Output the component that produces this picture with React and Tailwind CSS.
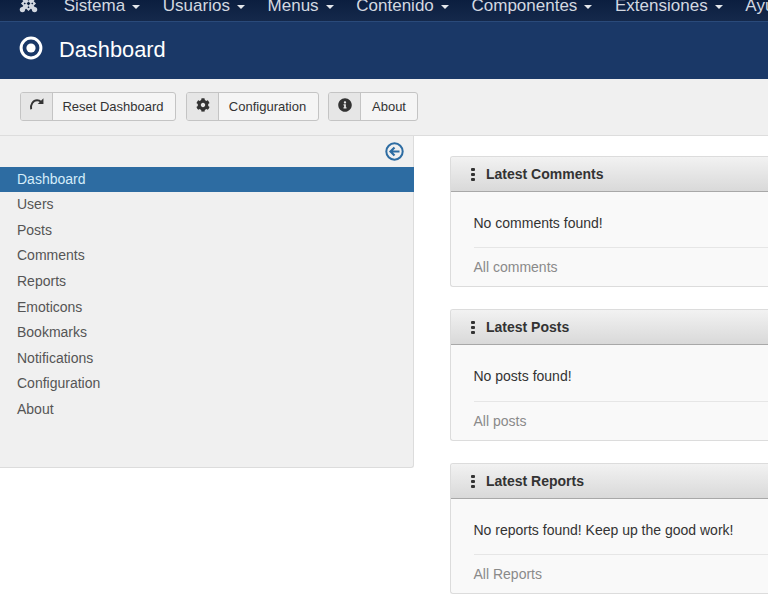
import React from "react";
import { FaCog, FaInfoCircle } from "react-icons/fa";

const navItems = ["Sistema", "Usuarios", "Menus", "Contenido", "Componentes", "Extensiones"];
const sideItems = ["Users", "Posts", "Comments", "Reports", "Emoticons", "Bookmarks", "Notifications", "Configuration", "About"];

function Caret() {
  return <span className="ml-[7px] inline-block h-0 w-0 border-x-[4.5px] border-t-[4.5px] border-x-transparent border-t-[#e4e7ec] align-middle" />;
}

function Joomla() {
  return (
    <svg viewBox="0 0 20 20" className="h-[19px] w-[19px]" fill="none" stroke="#d3d8e0" strokeWidth="4">
      <path d="M4 4l12 12M16 4L4 16" />
      <path d="M10 3.5L16.5 10 10 16.5 3.5 10z" strokeWidth="2" />
      <circle cx="3.6" cy="3.6" r="2.8" fill="#d3d8e0" stroke="none" />
      <circle cx="16.4" cy="3.6" r="2.8" fill="#d3d8e0" stroke="none" />
      <circle cx="3.6" cy="16.4" r="2.8" fill="#d3d8e0" stroke="none" />
      <circle cx="16.4" cy="16.4" r="2.8" fill="#d3d8e0" stroke="none" />
      <path d="M10 8L12 10 10 12 8 10z" fill="#10233f" stroke="none" />
    </svg>
  );
}

function DotCircle() {
  return (
    <svg viewBox="0 0 24 24" className="mb-[5px] h-[24px] w-[24px]" fill="none">
      <circle cx="12" cy="12" r="9.9" stroke="#fff" strokeWidth="3" />
      <circle cx="12" cy="12" r="4.6" fill="#fff" />
    </svg>
  );
}

function Redo() {
  return (
    <svg viewBox="0 0 14 14" className="h-[15px] w-[15px]" fill="none">
      <path d="M2 11.5C1 7 4 3 7.5 3c1.5 0 2.8.6 3.7 1.6" stroke="#333" strokeWidth="1.8" />
      <path d="M13.5 1.2v5.3H8.2z" fill="#333" />
    </svg>
  );
}

function BackArrow() {
  return (
    <svg viewBox="0 0 19 19" className="h-[19px] w-[19px]" fill="none" stroke="#2d6ca2">
      <circle cx="9.5" cy="9.5" r="8.2" strokeWidth="2" />
      <path d="M14.5 9.5H6M9.5 5.5l-4 4 4 4" strokeWidth="2.2" />
    </svg>
  );
}

function ToolButton({ icon, label, width, extra = "", labelClass = "pr-[2px]" }) {
  return (
    <button className={`flex h-[29px] items-stretch overflow-hidden rounded-[3px] border border-[#c4c4c4] bg-[#f5f5f5] text-[13px] text-[#333] ${width} ${extra}`}>
      <span className="flex w-[32px] items-center justify-center border-r border-[#c4c4c4] bg-[#e6e6e6] pb-[3px]">{icon}</span>
      <span className={`flex flex-1 items-center justify-center pt-[1px] ${labelClass}`}>{label}</span>
    </button>
  );
}

function Dots() {
  return (
    <span className="flex h-[13px] w-[4px] flex-col justify-between">
      <span className="h-[3px] w-[4px] rounded-[1px] bg-[#333]" />
      <span className="h-[3px] w-[4px] rounded-[1px] bg-[#333]" />
      <span className="h-[3px] w-[4px] rounded-[1px] bg-[#333]" />
    </span>
  );
}

function Panel({ title, message, link, bodyClass }) {
  return (
    <section className="overflow-hidden rounded-l-[3px] border-y border-l border-[#dcdcdc] bg-[#f9f9f9]">
      <header className="flex h-[35px] items-center gap-[11px] border-b border-[#a8a8a8] bg-gradient-to-b from-[#f2f2f2] to-[#d9d9d9] pl-[20px] text-[14px] font-bold text-[#333]">
        <Dots />
        <span>{title}</span>
      </header>
      <div className="pl-[22.5px]">
        <p className={`flex items-center text-[14px] text-[#333] ${bodyClass}`}>{message}</p>
        <p className="flex h-[39px] items-center border-t border-[#e6e6e6] text-[14px] text-[#8a8a8a]">{link}</p>
      </div>
    </section>
  );
}

export default function App() {
  return (
    <div className="h-[602px] w-[768px] overflow-hidden bg-white font-['Liberation_Sans',sans-serif]">
      <nav className="flex h-[22px] items-end gap-[22.7px] overflow-hidden border-b border-[#2a4a7a] bg-gradient-to-b from-[#0b1e3f] to-[#15294b] pl-[19px] text-[17px] text-[#d3d8e0]">
        <span className="mb-[8px] mr-[3px] shrink-0"><Joomla /></span>
        {navItems.map((n) => (
          <span key={n} className="whitespace-nowrap leading-[30px]">{n}<Caret /></span>
        ))}
        <span className="whitespace-nowrap leading-[30px]">Ayuda</span>
      </nav>
      <div className="flex h-[57px] items-center gap-[16px] bg-[#1a3867] pl-[19px] text-white">
        <DotCircle />
        <h1 className="text-[21.8px] font-normal">Dashboard</h1>
      </div>
      <div className="flex h-[57px] items-center gap-[10px] border-b border-[#dddddd] bg-[#f0f0f0] pl-[20px] pb-[2px]">
        <ToolButton icon={<Redo />} label="Reset Dashboard" width="w-[156px]" />
        <ToolButton icon={<FaCog className="text-[14px]" />} label="Configuration" width="w-[133px]" />
        <ToolButton icon={<FaInfoCircle className="text-[14px]" />} label="About" width="w-[90px]" extra="-ml-[1px]" labelClass="pr-0" />
      </div>
      <div className="flex items-start">
        <aside className="h-[332px] w-[414px] shrink-0 rounded-br-[3px] border-r border-b border-[#dcdcdc] bg-[#f0f0f0] text-[14px] text-[#555]">
          <div className="flex h-[31px] items-center justify-end pr-[9px]">
            <BackArrow />
          </div>
          <div className="mr-[-1px] flex h-[25px] items-center bg-[#2d6ca2] pl-[17px] text-[#d4edfa]">Dashboard</div>
          <ul>
            {sideItems.map((s) => (
              <li key={s} className="flex h-[25.6px] items-center pl-[17px]">{s}</li>
            ))}
          </ul>
        </aside>
        <main className="flex flex-1 flex-col gap-[22px] pl-[36px] pt-[20px]">
          <Panel title="Latest Comments" message="No comments found!" link="All comments" bodyClass="h-[55px] pt-[8px]" />
          <Panel title="Latest Posts" message="No posts found!" link="All posts" bodyClass="h-[56px] pt-[6px]" />
          <Panel title="Latest Reports" message="No reports found! Keep up the good work!" link="All Reports" bodyClass="h-[55px] pt-[8px]" />
        </main>
      </div>
    </div>
  );
}
